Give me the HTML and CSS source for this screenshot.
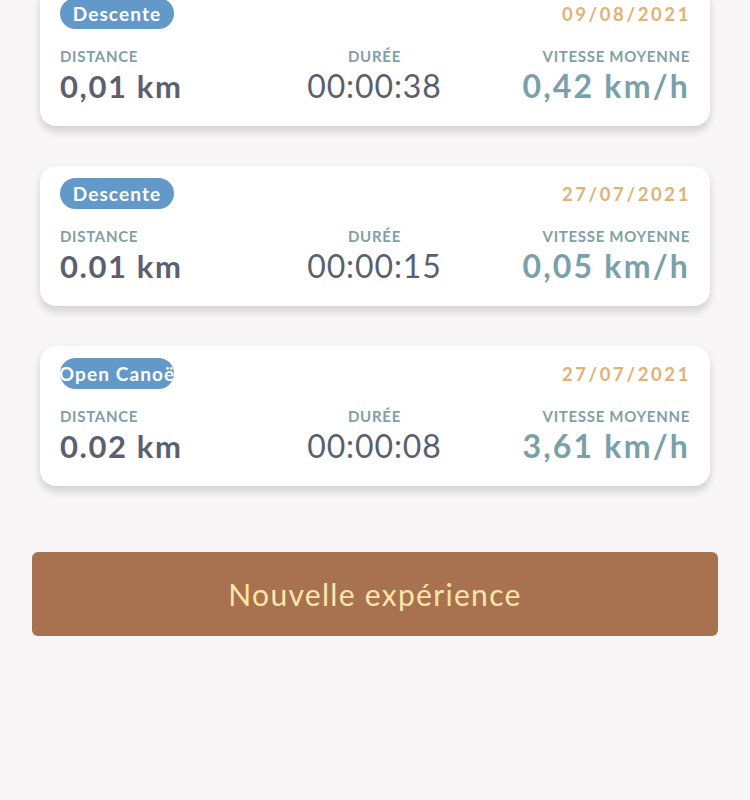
FILE: index.html
```html
<!DOCTYPE html>
<html lang="fr">
<head>
  <meta charset="UTF-8" />
  <title>Historique</title>
  <link rel="stylesheet" href="styles.css">
</head>
<body>
  <div class="list">
    <div class="card">
      <div class="card-top">
        <span class="badge">Descente</span>
        <span class="date">09/08/2021</span>
      </div>
      <div class="stats">
        <div class="stat">
          <div class="label">Distance</div>
          <div class="value distance">0,01 km</div>
        </div>
        <div class="stat center">
          <div class="label">Durée</div>
          <div class="value duration">00:00:38</div>
        </div>
        <div class="stat right">
          <div class="label">Vitesse moyenne</div>
          <div class="value speed">0,42 km/h</div>
        </div>
      </div>
    </div>

    <div class="card">
      <div class="card-top">
        <span class="badge">Descente</span>
        <span class="date">27/07/2021</span>
      </div>
      <div class="stats">
        <div class="stat">
          <div class="label">Distance</div>
          <div class="value distance">0.01 km</div>
        </div>
        <div class="stat center">
          <div class="label">Durée</div>
          <div class="value duration">00:00:15</div>
        </div>
        <div class="stat right">
          <div class="label">Vitesse moyenne</div>
          <div class="value speed">0,05 km/h</div>
        </div>
      </div>
    </div>

    <div class="card">
      <div class="card-top">
        <span class="badge">Open Canoë</span>
        <span class="date">27/07/2021</span>
      </div>
      <div class="stats">
        <div class="stat">
          <div class="label">Distance</div>
          <div class="value distance">0.02 km</div>
        </div>
        <div class="stat center">
          <div class="label">Durée</div>
          <div class="value duration">00:00:08</div>
        </div>
        <div class="stat right">
          <div class="label">Vitesse moyenne</div>
          <div class="value speed">3,61 km/h</div>
        </div>
      </div>
    </div>
  </div>

  <button class="new-btn">Nouvelle expérience</button>
</body>
</html>
```

FILE: styles.css
```css
:root {
  --bg: #f8f6f7;
  --card: #ffffff;
  --badge: #6399c8;
  --date: #e0b275;
  --label: #7fa0a6;
  --dark: #5b5f6e;
  --speed: #7aa0a9;
  --btn: #a87251;
  --btn-text: #fde5a8;
}

* {
  box-sizing: border-box;
}

body {
  margin: 0;
  background: var(--bg);
  font-family: Lato, "Open Sans", sans-serif;
  overflow: hidden;
}

.list {
  display: flex;
  flex-direction: column;
  gap: 40px;
  margin-top: -14px;
  padding: 0 40px;
}

.card {
  height: 140px;
  padding: 12px 21px 0 20px;
  background: var(--card);
  border-radius: 16px;
  box-shadow: 0 4px 8px rgba(0, 0, 0, 0.14), 0 10px 6px rgba(0, 0, 0, 0.03);
}

.card-top {
  display: flex;
  justify-content: space-between;
  align-items: center;
  height: 31px;
}

.badge {
  display: flex;
  justify-content: center;
  align-items: center;
  width: 114px;
  height: 31px;
  overflow: hidden;
  white-space: nowrap;
  border-radius: 16px;
  background: var(--badge);
  color: #fff;
  font-weight: 700;
  font-size: 19px;
  letter-spacing: 1.1px;
}

.date {
  color: var(--date);
  font-weight: 700;
  font-size: 18.5px;
  letter-spacing: 2.6px;
  margin-right: -2px;
}

.stats {
  display: grid;
  grid-template-columns: 1fr 1fr 1fr;
  margin-top: 18px;
}

.stat.center {
  text-align: center;
}

.stat.right {
  text-align: right;
}

.label {
  color: var(--label);
  font-size: 15px;
  line-height: 18px;
  font-weight: 700;
  letter-spacing: 0.7px;
  text-transform: uppercase;
}

.stat.right .label,
.stat.right .value {
  margin-right: -1px;
}

.value {
  margin-top: 3px;
  font-size: 31px;
  line-height: 36px;
}

.distance {
  color: var(--dark);
  font-weight: 700;
  letter-spacing: 1.6px;
}

.duration {
  color: var(--dark);
  font-weight: 400;
  font-size: 32px;
  letter-spacing: 0.9px;
}

.speed {
  color: var(--speed);
  font-weight: 700;
  font-size: 32px;
  letter-spacing: 2.2px;
}

.new-btn {
  display: block;
  width: calc(100% - 64px);
  height: 84px;
  margin: 66px 32px 0;
  border: none;
  border-radius: 6px;
  background: var(--btn);
  color: var(--btn-text);
  font-family: inherit;
  font-size: 30px;
  letter-spacing: 1.3px;
  cursor: pointer;
}
```
